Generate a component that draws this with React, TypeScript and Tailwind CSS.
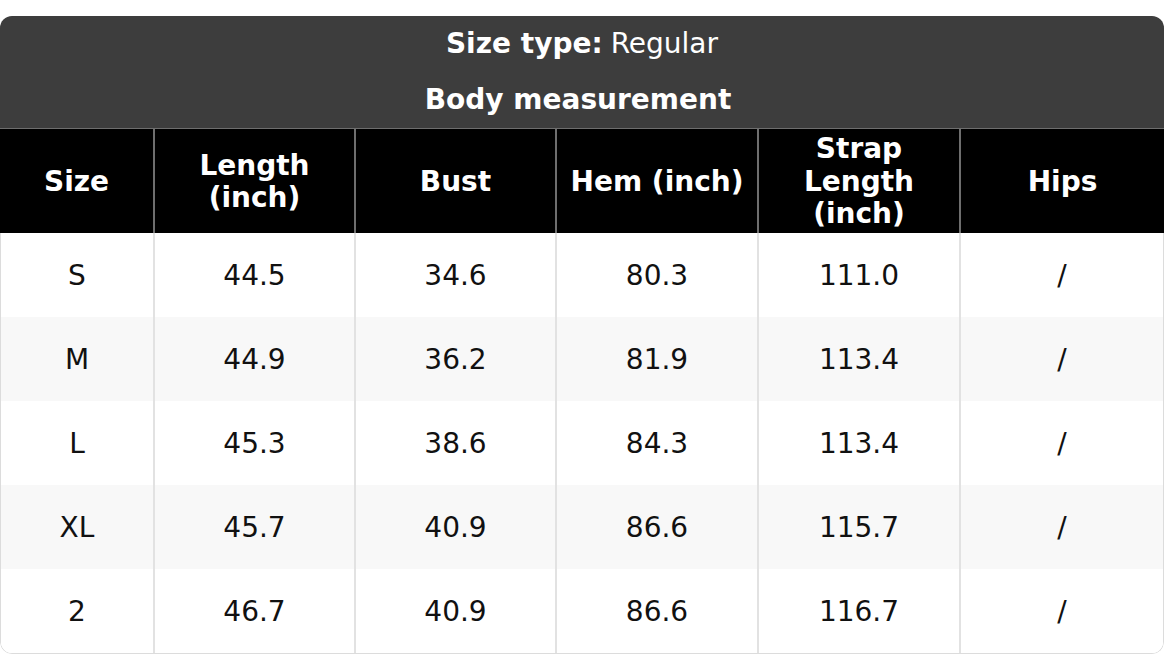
const columns = ["Size", "Length (inch)", "Bust", "Hem (inch)", "Strap Length (inch)", "Hips"];

const rows = [
  ["S", "44.5", "34.6", "80.3", "111.0", "/"],
  ["M", "44.9", "36.2", "81.9", "113.4", "/"],
  ["L", "45.3", "38.6", "84.3", "113.4", "/"],
  ["XL", "45.7", "40.9", "86.6", "115.7", "/"],
  ["2", "46.7", "40.9", "86.6", "116.7", "/"],
];

export default function App() {
  return (
    <div className="w-[1164px] bg-white pt-4 font-['DejaVu_Sans',sans-serif] text-[28px]">
      <div className="overflow-hidden rounded-xl">
        {/* title block */}
        <div className="bg-[#3d3d3d] text-white">
          <div className="flex h-14 items-center justify-center">
            <span className="font-bold">Size type:</span>
            <span className="ml-2">Regular</span>
          </div>
          <div className="flex h-14 items-center justify-center pr-2 font-bold">
            Body measurement
          </div>
        </div>
        <div className="h-px bg-[#6e6e6e]" />

        {/* column headings */}
        <div className="grid h-[104px] grid-cols-[153px_201px_201px_202px_202px_1fr] bg-black font-bold leading-[1.16] text-white">
          {columns.map((c, i) => (
            <div
              key={c}
              className={`flex items-center justify-center px-2 pt-[2px] text-center ${i > 0 ? "border-l-2 border-[#6e6e6e]" : ""}`}
            >
              {c}
            </div>
          ))}
        </div>

        {/* body rows */}
        <div className="overflow-hidden rounded-b-xl border-x border-b border-[#dcdcdc] text-[#111]">
          {rows.map((r, ri) => (
            <div
              key={ri}
              className={`grid h-[84px] grid-cols-[152px_201px_201px_202px_202px_1fr] ${ri % 2 === 1 ? "bg-[#f8f8f8]" : "bg-white"}`}
            >
              {r.map((v, i) => (
                <div
                  key={i}
                  className={`flex items-center justify-center pt-[2px] ${i > 0 ? "border-l-2 border-[#e2e2e2]" : ""}`}
                >
                  {v}
                </div>
              ))}
            </div>
          ))}
        </div>
      </div>
    </div>
  );
}
